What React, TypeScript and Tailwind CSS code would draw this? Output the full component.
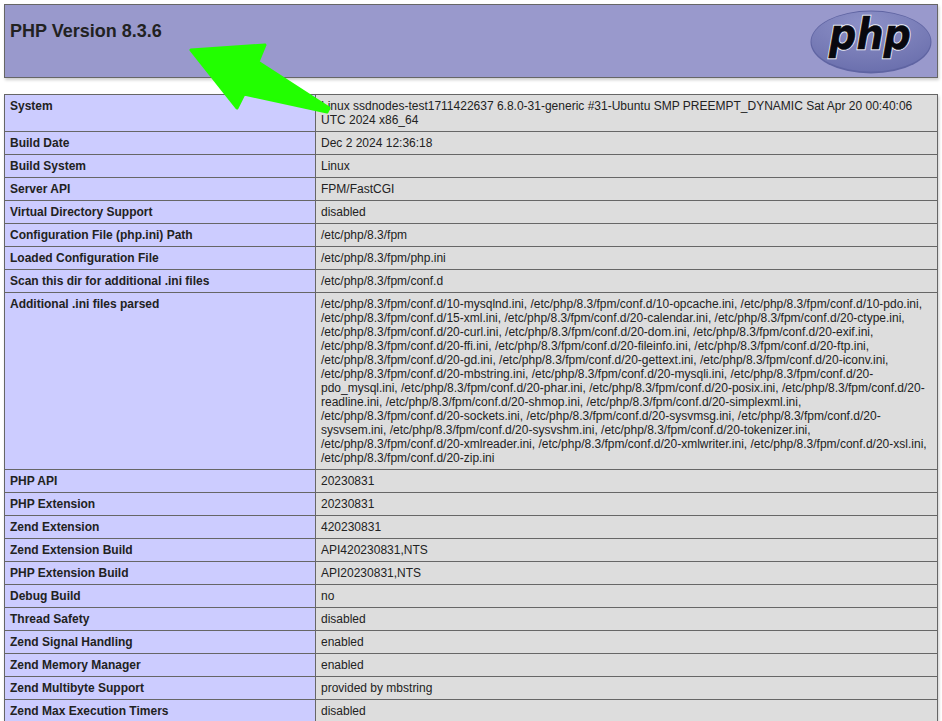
const rows: [string, string][] = [
  ["System", "Linux ssdnodes-test1711422637 6.8.0-31-generic #31-Ubuntu SMP PREEMPT_DYNAMIC Sat Apr 20 00:40:06 UTC 2024 x86_64"],
  ["Build Date", "Dec 2 2024 12:36:18"],
  ["Build System", "Linux"],
  ["Server API", "FPM/FastCGI"],
  ["Virtual Directory Support", "disabled"],
  ["Configuration File (php.ini) Path", "/etc/php/8.3/fpm"],
  ["Loaded Configuration File", "/etc/php/8.3/fpm/php.ini"],
  ["Scan this dir for additional .ini files", "/etc/php/8.3/fpm/conf.d"],
  ["Additional .ini files parsed", "/etc/php/8.3/fpm/conf.d/10-mysqlnd.ini, /etc/php/8.3/fpm/conf.d/10-opcache.ini, /etc/php/8.3/fpm/conf.d/10-pdo.ini, /etc/php/8.3/fpm/conf.d/15-xml.ini, /etc/php/8.3/fpm/conf.d/20-calendar.ini, /etc/php/8.3/fpm/conf.d/20-ctype.ini, /etc/php/8.3/fpm/conf.d/20-curl.ini, /etc/php/8.3/fpm/conf.d/20-dom.ini, /etc/php/8.3/fpm/conf.d/20-exif.ini, /etc/php/8.3/fpm/conf.d/20-ffi.ini, /etc/php/8.3/fpm/conf.d/20-fileinfo.ini, /etc/php/8.3/fpm/conf.d/20-ftp.ini, /etc/php/8.3/fpm/conf.d/20-gd.ini, /etc/php/8.3/fpm/conf.d/20-gettext.ini, /etc/php/8.3/fpm/conf.d/20-iconv.ini, /etc/php/8.3/fpm/conf.d/20-mbstring.ini, /etc/php/8.3/fpm/conf.d/20-mysqli.ini, /etc/php/8.3/fpm/conf.d/20-pdo_mysql.ini, /etc/php/8.3/fpm/conf.d/20-phar.ini, /etc/php/8.3/fpm/conf.d/20-posix.ini, /etc/php/8.3/fpm/conf.d/20-readline.ini, /etc/php/8.3/fpm/conf.d/20-shmop.ini, /etc/php/8.3/fpm/conf.d/20-simplexml.ini, /etc/php/8.3/fpm/conf.d/20-sockets.ini, /etc/php/8.3/fpm/conf.d/20-sysvmsg.ini, /etc/php/8.3/fpm/conf.d/20-sysvsem.ini, /etc/php/8.3/fpm/conf.d/20-sysvshm.ini, /etc/php/8.3/fpm/conf.d/20-tokenizer.ini, /etc/php/8.3/fpm/conf.d/20-xmlreader.ini, /etc/php/8.3/fpm/conf.d/20-xmlwriter.ini, /etc/php/8.3/fpm/conf.d/20-xsl.ini, /etc/php/8.3/fpm/conf.d/20-zip.ini"],
  ["PHP API", "20230831"],
  ["PHP Extension", "20230831"],
  ["Zend Extension", "420230831"],
  ["Zend Extension Build", "API420230831,NTS"],
  ["PHP Extension Build", "API20230831,NTS"],
  ["Debug Build", "no"],
  ["Thread Safety", "disabled"],
  ["Zend Signal Handling", "enabled"],
  ["Zend Memory Manager", "enabled"],
  ["Zend Multibyte Support", "provided by mbstring"],
  ["Zend Max Execution Timers", "disabled"],
];

function PhpLogo() {
  const text = {
    x: 60,
    y: 39,
    textAnchor: "middle" as const,
    fontFamily: "'DejaVu Sans', sans-serif",
    fontWeight: 700,
    fontStyle: "italic",
    fontSize: 43,
    textLength: 82,
    lengthAdjust: "spacingAndGlyphs" as const,
  };
  return (
    <svg width="122" height="64" viewBox="0 0 122 64" aria-label="php logo" className="mt-[1px]">
      <defs>
        <radialGradient id="logoFill" cx="0.45" cy="0.2" r="0.9">
          <stop offset="0" stopColor="#8d91c8" />
          <stop offset="0.6" stopColor="#777bb6" />
          <stop offset="1" stopColor="#676cab" />
        </radialGradient>
      </defs>
      <ellipse cx="61" cy="32" rx="60.5" ry="31.5" fill="#5f64a2" />
      <ellipse cx="61" cy="31.5" rx="59.5" ry="30" fill="url(#logoFill)" />
      <text {...text} fill="#fff" stroke="#ecedf6" strokeWidth="2.6">php</text>
      <text {...text} fill="#08080f" stroke="#08080f" strokeWidth="0.6">php</text>
    </svg>
  );
}

export default function App() {
  return (
    <div className="relative h-[721px] overflow-hidden bg-white px-1 pt-1 font-['Liberation_Sans',Arial,sans-serif] text-xs text-[#222]">
      <div className="flex h-[74px] w-[934px] items-start justify-between border border-[#666] bg-[#9999cc] pl-[5px] pr-[5px] pt-[4px] shadow-[1px_2px_3px_#ccc]">
        <h1 className="text-lg font-bold leading-[44px]">PHP Version 8.3.6</h1>
        <PhpLogo />
      </div>
      <table className="mt-4 w-[934px] table-fixed border-collapse shadow-[1px_2px_3px_#ccc]">
        <colgroup>
          <col className="w-[311px]" />
          <col />
        </colgroup>
        <tbody>
          {rows.map(([k, v]) => (
            <tr key={k}>
              <td className="border border-[#666] bg-[#ccccff] px-[5px] py-1 align-top font-bold leading-[14px]">{k}</td>
              <td className="border border-[#666] bg-[#dddddd] px-[5px] py-1 align-top leading-[14px] break-words">{v}</td>
            </tr>
          ))}
        </tbody>
      </table>
      <svg className="pointer-events-none absolute left-0 top-0" width="942" height="721" viewBox="0 0 942 721">
        <path
          d="M191 50 L265 45 L258 62 L329 108 L327 112 L244 94 L237 108 Z"
          fill="#22ff00"
          stroke="#22ff00"
          strokeWidth="3"
          strokeLinejoin="round"
        />
      </svg>
    </div>
  );
}
